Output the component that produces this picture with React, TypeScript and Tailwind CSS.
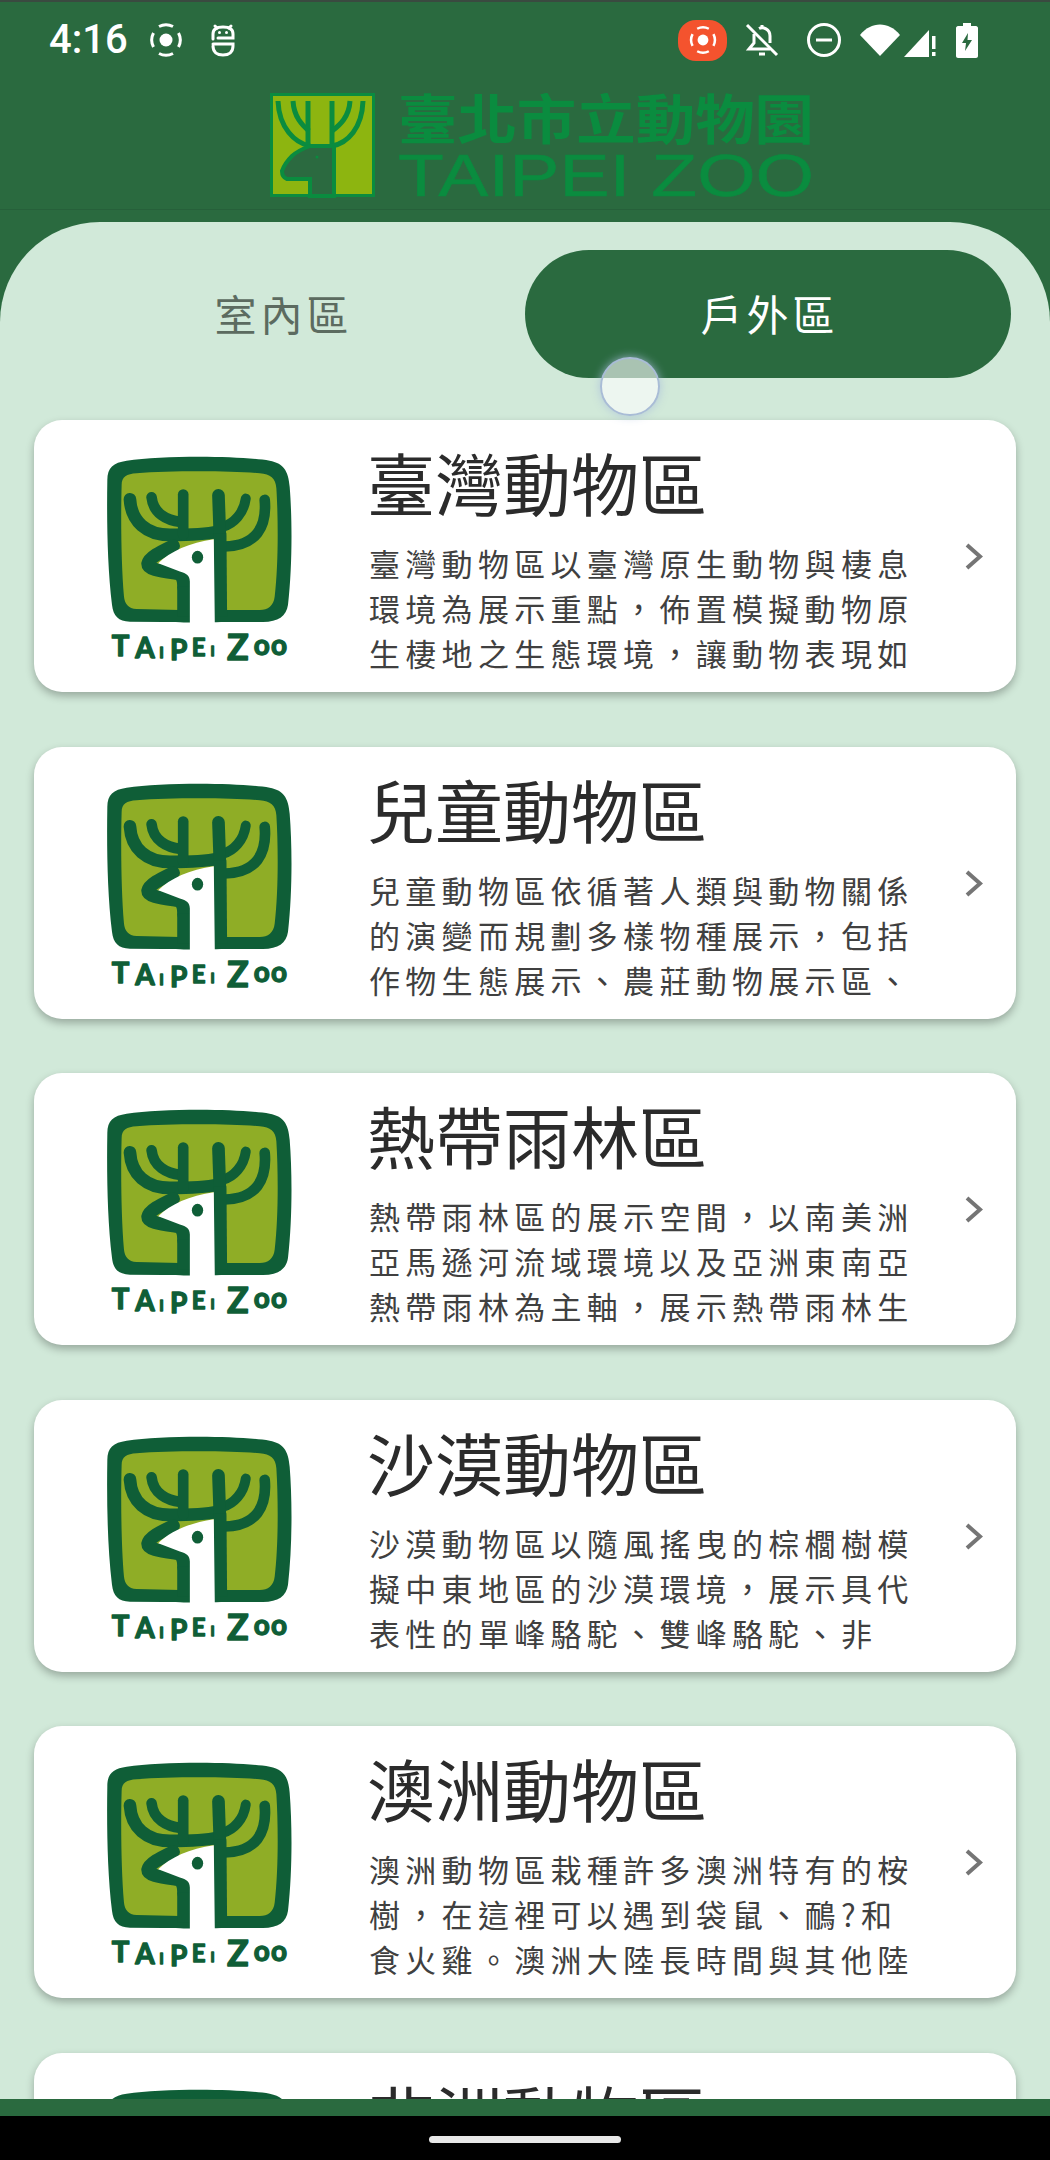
import React from "react";

const CJK = '"Noto Sans CJK TC", "Noto Sans", sans-serif';

function Logo() {
  const d = "#0f5e37";
  return (
    <svg viewBox="225 105 565 625" className="w-[188px] h-[208px] shrink-0">
      <path d="M232 180C232 142 250 128 290 122C400 106 620 106 720 122C760 130 776 150 780 200C788 300 788 440 775 555C770 590 745 606 700 607L590 607C500 609 480 609 400 607L300 606C265 604 250 590 246 555C232 440 230 300 232 180Z" fill={d} />
      <path d="M275 195C275 170 290 162 320 160C420 152 600 152 690 160C722 163 738 175 740 205C746 300 746 440 735 530C732 558 715 570 690 571L580 571L580 400L450 400L450 571L320 568C295 566 284 552 282 530C274 440 272 300 275 195Z" fill="#8fad26" />
      <g fill="none" stroke={d} strokeLinecap="round" strokeLinejoin="round">
        <path d="M300 238C304 305 350 345 420 345C470 345 520 345 565 335" strokeWidth="38" />
        <path d="M365 232C370 280 410 302 452 306" strokeWidth="32" />
        <path d="M460 224L460 345" strokeWidth="32" />
        <path d="M705 240C712 320 680 378 585 380" strokeWidth="32" />
        <path d="M648 236C642 280 612 312 580 320" strokeWidth="30" />
        <path d="M566 226L570 340" strokeWidth="38" />
        <path d="M430 378C395 395 358 412 354 432C354 448 385 452 440 460C460 465 462 482 462 502" strokeWidth="40" />
      </g>
      <path d="M551 340H590L592 590H551Z" fill={d} />
      <path d="M442 500H482V590H442Z" fill={d} />
      <path d="M385 430C420 395 480 368 552 358L555 612L480 612L480 485C480 468 470 460 450 455Z" fill="#fff" />
      <ellipse cx="503" cy="412" rx="17" ry="19" fill={d} />
      <text fill={d} stroke={d} strokeWidth="4" strokeLinejoin="round" fontFamily="Lato, sans-serif" fontWeight="700">
        <tspan x="245" y="710" fontSize="88">T</tspan>
        <tspan x="316" y="714" fontSize="84">A</tspan>
        <tspan x="388" y="716" fontSize="46">I</tspan>
        <tspan x="420" y="722" fontSize="84">P</tspan>
        <tspan x="486" y="710" fontSize="72">E</tspan>
        <tspan x="542" y="710" fontSize="42">I</tspan>
        <tspan x="592" y="722" fontSize="108">Z</tspan>
        <tspan x="672" y="706" fontSize="84">o</tspan>
        <tspan x="724" y="706" fontSize="84">o</tspan>
      </text>
    </svg>
  );
}

function HeaderLogo() {
  const g = "#0a8c3f";
  return (
    <svg viewBox="0 0 544 106" className="w-[544px] h-[106px]">
      <rect x="1.500" y="1.500" width="102" height="101" fill="#8db510" stroke={g} strokeWidth="3" />
      <g fill="none" stroke={g} strokeWidth="5">
        <path d="M8 8C9 35 25 50 40 53" />
        <path d="M23 8C24 24 32 32 39 38" />
        <path d="M38 8L38 55" />
        <path d="M62 8L62 55" />
        <path d="M80 8C79 24 70 32 62 38" />
        <path d="M93 8C92 35 78 50 62 53" />
      </g>
      <path d="M64 53L40 53C32 56 26 59 22 63C17 68 14 72 12 78C12 83 14 85 17 86L40 86L40 103L64 103Z" fill="#2b6a40" stroke={g} strokeWidth="4" />
      <circle cx="47" cy="64" r="1.500" fill={g} />
      <text x="128" y="47" fill={g} fontFamily={CJK} fontWeight="700" fontSize="54" textLength="416" lengthAdjust="spacingAndGlyphs">臺北市立動物園</text>
      <text x="128" y="103" fill={g} stroke={g} strokeWidth="0.500" fontFamily='"Liberation Sans", sans-serif' fontSize="60" textLength="416" lengthAdjust="spacingAndGlyphs">TAIPEI ZOO</text>
    </svg>
  );
}

function RecIcon({ small = false }: { small?: boolean }) {
  return (
    <svg viewBox="0 0 36 36" className={small ? "w-[30px] h-[30px]" : "w-[36px] h-[36px]"} fill="none" stroke="#fff" strokeWidth="3">
      <circle cx="18" cy="18" r="6.500" fill="#fff" stroke="none" />
      <path d="M5.500 11A15 15 0 0 0 5.500 25" />
      <path d="M30.500 11A15 15 0 0 1 30.500 25" />
      <path d="M11 4.500A15 15 0 0 1 25 4.500" />
      <path d="M11 31.500A15 15 0 0 0 25 31.500" />
    </svg>
  );
}

function StatusBar() {
  return (
    <div className="h-[66px] flex items-center justify-between pl-[49px] pr-[72px] pt-[10px] text-white">
      <div className="flex items-center">
        <span className="text-[40px] leading-none font-medium" style={{ fontFamily: "Roboto, sans-serif" }}>4:16</span>
        <span className="ml-[20px] flex"><RecIcon /></span>
        <svg viewBox="0 0 26 34" className="ml-[26px] w-[26px] h-[34px]" fill="none" stroke="#fff" strokeWidth="3" strokeLinecap="round">
          <path d="M3 16V11C3 6 7 4 13 4C19 4 23 6 23 11V15H8" />
          <path d="M3 21H23V23C23 29 19 32 13 32C7 32 3 29 3 23" />
          <path d="M5 3L7 5M21 3L19 5" />
          <circle cx="9.500" cy="9.500" r="1.500" fill="#fff" stroke="none" />
          <circle cx="16.500" cy="9.500" r="1.500" fill="#fff" stroke="none" />
        </svg>
      </div>
      <div className="flex items-center">
        <div className="w-[49px] h-[41px] rounded-[18px] bg-[#f4532e] flex items-center justify-center"><RecIcon small /></div>
        <svg viewBox="0 0 34 34" className="ml-[18px] w-[34px] h-[34px]" fill="none" stroke="#fff" strokeWidth="3">
          <path d="M2 2L32 32" />
          <path d="M9 11V20L4 26H25M14 5.500C18 3.500 25 6 25 13V20" />
          <path d="M14 31H20M17 2V5" />
        </svg>
        <svg viewBox="0 0 34 34" className="ml-[28px] w-[34px] h-[34px]" fill="none" stroke="#fff" strokeWidth="3">
          <circle cx="17" cy="17" r="15.500" />
          <path d="M9 17H25" />
        </svg>
        <svg viewBox="0 0 40 32" className="ml-[19px] w-[40px] h-[32px]" fill="#fff">
          <path d="M0 11C11 -3 29 -3 40 11L20 32Z" />
        </svg>
        <svg viewBox="0 0 33 33" className="ml-[4px] w-[33px] h-[33px]" fill="#fff">
          <path d="M0 33L25 6V33Z" />
          <rect x="28" y="12" width="3.500" height="13" />
          <rect x="28" y="28" width="3.500" height="4" />
        </svg>
        <svg viewBox="0 0 22 35" className="ml-[19px] w-[22px] h-[35px]" fill="#fff">
          <path fillRule="evenodd" d="M7 0H15V3H20C21 3 22 4 22 5V33C22 34 21 35 20 35H2C1 35 0 34 0 33V5C0 4 1 3 2 3H7ZM12 10L6 20H10L9 28L16 17H11.500Z" />
        </svg>
      </div>
    </div>
  );
}

const cards = [
  { title: "臺灣動物區", lines: ["臺灣動物區以臺灣原生動物與棲息", "環境為展示重點，佈置模擬動物原", "生棲地之生態環境，讓動物表現如"] },
  { title: "兒童動物區", lines: ["兒童動物區依循著人類與動物關係", "的演變而規劃多樣物種展示，包括", "作物生態展示、農莊動物展示區、"] },
  { title: "熱帶雨林區", lines: ["熱帶雨林區的展示空間，以南美洲", "亞馬遜河流域環境以及亞洲東南亞", "熱帶雨林為主軸，展示熱帶雨林生"] },
  { title: "沙漠動物區", lines: ["沙漠動物區以隨風搖曳的棕櫚樹模", "擬中東地區的沙漠環境，展示具代", "表性的單峰駱駝、雙峰駱駝、非"] },
  { title: "澳洲動物區", lines: ["澳洲動物區栽種許多澳洲特有的桉", "樹，在這裡可以遇到袋鼠、鴯?和", "食火雞。澳洲大陸長時間與其他陸"] },
  { title: "非洲動物區", lines: ["", "", ""] },
];

function Card({ title, lines }: { title: string; lines: string[] }) {
  return (
    <div className="shrink-0 h-[272px] mx-[34px] mb-[54.6px] rounded-[28px] bg-white shadow-[0_4px_8px_rgba(0,0,0,0.28)] flex items-start">
      <div className="ml-[71px] mt-[35px] flex"><Logo /></div>
      <div className="ml-[74px] w-[598px]">
        <div className="mt-[22px] text-[68px] leading-[80px] text-[#2b2b2b] whitespace-nowrap">{title}</div>
        <div className="mt-[18px] text-[31px] leading-[45px] tracking-[5.3px] text-[#404040] pl-[2px]">
          {lines.map((l, i) => (
            <div key={i} className="h-[45px] whitespace-nowrap">{l}</div>
          ))}
        </div>
      </div>
      <svg viewBox="0 0 18 27" className="mt-[123px] w-[18px] h-[27px] shrink-0" fill="none" stroke="#757575" strokeWidth="4">
        <path d="M2 2L15 13.500L2 25" />
      </svg>
    </div>
  );
}

export default function App() {
  return (
    <div className="relative w-[1050px] h-[2160px] overflow-hidden flex flex-col bg-[#2a6a3f]" style={{ fontFamily: CJK }}>
      <div className="h-[2px] bg-[#3a4a40] shrink-0" />
      <StatusBar />
      <div className="shrink-0 h-[142px] flex justify-center pt-[25px] pl-[34px] border-b border-[#26603a]">
        <div className="flex"><HeaderLogo /></div>
      </div>
      <div className="shrink-0 h-[12px]" />
      <div className="flex-1 min-h-0 overflow-hidden bg-[#d1e9d9] rounded-t-[100px] flex flex-col">
        <div className="shrink-0 h-[198px] pt-[28px] pl-[34px] pr-[39px] flex">
          <div className="w-[491px] h-[128px] pl-[8px] pb-[3px] flex items-center justify-center text-[42px] tracking-[4px] text-[#5c6b60]">室內區</div>
          <div className="w-[486px] h-[128px] pl-[3px] pb-[3px] rounded-[64px] bg-[#2a6a3f] flex items-center justify-center text-[42px] tracking-[4px] text-white">戶外區</div>
        </div>
        {cards.map((c, i) => (
          <Card key={i} title={c.title} lines={c.lines} />
        ))}
      </div>
      <div className="shrink-0 h-[17px] bg-[#2a6a3f]" />
      <div className="shrink-0 h-[44px] bg-black flex justify-center pt-[20px]">
        <div className="w-[192px] h-[7px] rounded-full bg-[#e8e8e8]" />
      </div>
      <div className="absolute left-[600px] top-[357px] w-[60px] h-[59px] rounded-full bg-[rgba(255,255,255,0.6)] border-2 border-[#a9bcd6] shadow-[0_0_10px_rgba(170,190,220,0.8)]" />
    </div>
  );
}
